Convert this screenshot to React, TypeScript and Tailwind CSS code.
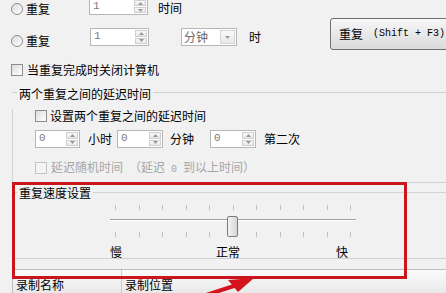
import React from "react";

function Tri({ up }: { up?: boolean }) {
  return (
    <svg width="5" height="3" viewBox="0 0 5 3">
      {up ? <polygon points="0,3 5,3 2.5,0" fill="#9a9a9a" /> : <polygon points="0,0 5,0 2.5,3" fill="#9a9a9a" />}
    </svg>
  );
}

function Spin({ v, className }: { v: string; className: string }) {
  return (
    <div className={`flex border border-[#b7b7b7] bg-white ${className}`}>
      <div className="flex-1 pl-[3px] text-[#7a7a7a] text-[11px] leading-[15px] font-[family-name:'Liberation_Mono',monospace]">{v}</div>
      <div className="w-[14px] flex flex-col gap-[1px] p-[1px] bg-white">
        <div className="flex-1 flex items-center justify-center border border-[#cfcfcf] bg-linear-to-b from-[#f8f8f8] to-[#e8e8e8]">
          <Tri up />
        </div>
        <div className="flex-1 flex items-center justify-center border border-[#cfcfcf] bg-linear-to-b from-[#f8f8f8] to-[#e8e8e8]">
          <Tri />
        </div>
      </div>
    </div>
  );
}

function Radio() {
  return <div className="w-[12px] h-[12px] rounded-full border border-[#8d8d8d] bg-linear-to-br from-[#dcdcdc] to-[#ffffff]" />;
}

function Check({ disabled }: { disabled?: boolean }) {
  return disabled ? (
    <div className="w-[12px] h-[12px] border border-[#c4c4c4] bg-[#f4f4f4]" />
  ) : (
    <div className="w-[12px] h-[12px] border border-[#8d8d8d] bg-linear-to-br from-[#dcdcdc] to-[#ffffff]" />
  );
}

export default function App() {
  return (
    <div className="relative w-[446px] h-[293px] overflow-hidden bg-[#f1f1f1] text-[12px] leading-[14px] text-black font-[family-name:'Noto_Sans_CJK_SC',sans-serif]">
      {/* top rows */}
      <div className="flex -mt-[2px]">
        <div className="flex flex-col w-[330px] shrink-0">
          <div className="flex items-center h-[17px]">
            <div className="flex items-center ml-[11px] mt-[5px] gap-[3px]">
              <Radio />
              <span>重复</span>
            </div>
            <Spin v="1" className="ml-[39px] w-[59px] h-[17px]" />
            <span className="ml-[10px] mt-[3px]">时间</span>
          </div>
          <div className="flex items-center h-[18px] mt-[13px]">
            <div className="flex items-center ml-[11px] mt-[7px] gap-[3px]">
              <Radio />
              <span>重复</span>
            </div>
            <Spin v="1" className="ml-[40px] w-[59px] h-[18px]" />
            <div className="ml-[32px] w-[56px] h-[18px] flex border border-[#b7b7b7] bg-white">
              <span className="flex-1 pl-[2px] leading-[16px] text-[#6a6a6a]">分钟</span>
              <div className="w-[15px] m-[1px] flex items-center justify-center border border-[#d4d4d4] bg-linear-to-b from-[#fafafa] to-[#e9e9e9]">
                <Tri />
              </div>
            </div>
            <span className="ml-[12px]">时</span>
          </div>
        </div>
        <div className="mt-[20px] h-[32px] w-[130px] shrink-0 flex items-center pl-[8px] rounded-[3px] border border-[#707070] bg-linear-to-b from-[#f7f7f7] to-[#dadada]">
          <span>重复</span>
          <span className="ml-[10px] text-[10px] font-[family-name:'Liberation_Mono',monospace]">(Shift + F3)</span>
        </div>
      </div>

      {/* checkbox row */}
      <div className="flex items-center h-[14px] mt-[13px] ml-[11px] gap-[4px]">
        <Check />
        <span>当重复完成时关闭计算机</span>
      </div>

      {/* group 1 */}
      <div className="ml-[12px] w-[450px] mt-[10px]">
        <div className="flex h-[14px]">
          <div className="w-[5px] mt-[5px] border-t border-[#d2d2d2]" />
          <span className="px-[2px]">两个重复之间的延迟时间</span>
          <div className="flex-1 mt-[5px] border-t border-[#d2d2d2]" />
        </div>
        <div className="border-l border-b border-[#d2d2d2] pl-[22px] pb-[7px]">
          <div className="flex items-center h-[14px] mt-[8px] gap-[3px]">
            <Check />
            <span>设置两个重复之间的延迟时间</span>
          </div>
          <div className="flex items-center h-[18px] mt-[7px]">
            <Spin v="0" className="w-[45px] h-[18px]" />
            <span className="ml-[8px]">小时</span>
            <Spin v="0" className="ml-[5px] w-[46px] h-[18px]" />
            <span className="ml-[7px]">分钟</span>
            <Spin v="0" className="ml-[16px] w-[46px] h-[18px]" />
            <span className="ml-[8px]">第二次</span>
          </div>
          <div className="flex items-center h-[14px] mt-[13px] gap-[4px] text-[#a6a6a6]">
            <Check disabled />
            <span>
              延迟随机时间<span className="text-[10px] font-[family-name:'Liberation_Mono',monospace]"> </span>（延迟
              <span className="text-[10px] font-[family-name:'Liberation_Mono',monospace]"> 0 </span>到以上时间）
            </span>
          </div>
        </div>
      </div>

      {/* group 2 */}
      <div className="ml-[12px] w-[450px] mt-[3px]">
        <div className="flex h-[14px]">
          <div className="w-[5px] mt-[6px] border-t border-[#d2d2d2]" />
          <span className="px-[2px]">重复速度设置</span>
          <div className="flex-1 mt-[6px] border-t border-[#d2d2d2]" />
        </div>
        <div className="border-l border-b border-[#d2d2d2]">
          <div className="relative ml-[97px] w-[246px]">
            <div className="mt-[5px] h-[5px] flex justify-between px-[5px]">
              {Array.from({ length: 11 }).map((_, i) => (
                <div key={i} className="w-[1px] h-[5px] bg-[#c2c2c2]" />
              ))}
            </div>
            <div className="mt-[9px] h-[1px] bg-[#a2a2a2]" />
            <div className="h-[1px] bg-white" />
            <div className="mt-[11px] h-[5px] flex justify-between px-[5px]">
              {Array.from({ length: 11 }).map((_, i) => (
                <div key={i} className="w-[1px] h-[5px] bg-[#c2c2c2]" />
              ))}
            </div>
            <div className="absolute left-[117px] top-[11px] w-[11px] h-[21px] rounded-[2px] border border-[#7a7a7a] bg-linear-to-r from-[#f4f4f4] to-[#d6d6d6]" />
          </div>
          <div className="flex h-[13px] mt-[8px] leading-[13px]">
            <span className="ml-[97px]">慢</span>
            <span className="ml-[94px]">正常</span>
            <span className="ml-[96px]">快</span>
          </div>
        </div>
      </div>

      {/* table header */}
      <div className="ml-[12px] mt-[10px] h-[30px] flex border-t border-l border-[#bdbdbd] bg-linear-to-b from-[#fbfbfb] to-[#e4e4e4]">
        <div className="w-[109px] border-r border-[#c9c9c9] pl-[3px] pt-[8px]">录制名称</div>
        <div className="pl-[3px] pt-[8px]">录制位置</div>
      </div>

      {/* red highlight overlay */}
      <div className="absolute left-[12px] top-[182px] w-[395px] h-[97px] border-[3px] border-[#c9161d]" />
      <svg className="absolute left-0 top-0 pointer-events-none" width="446" height="293" viewBox="0 0 446 293">
        <line x1="200" y1="297" x2="234" y2="286" stroke="#d4141a" strokeWidth="4" />
        <polygon points="254,278 228,280 238,292" fill="#d4141a" />
      </svg>
    </div>
  );
}
